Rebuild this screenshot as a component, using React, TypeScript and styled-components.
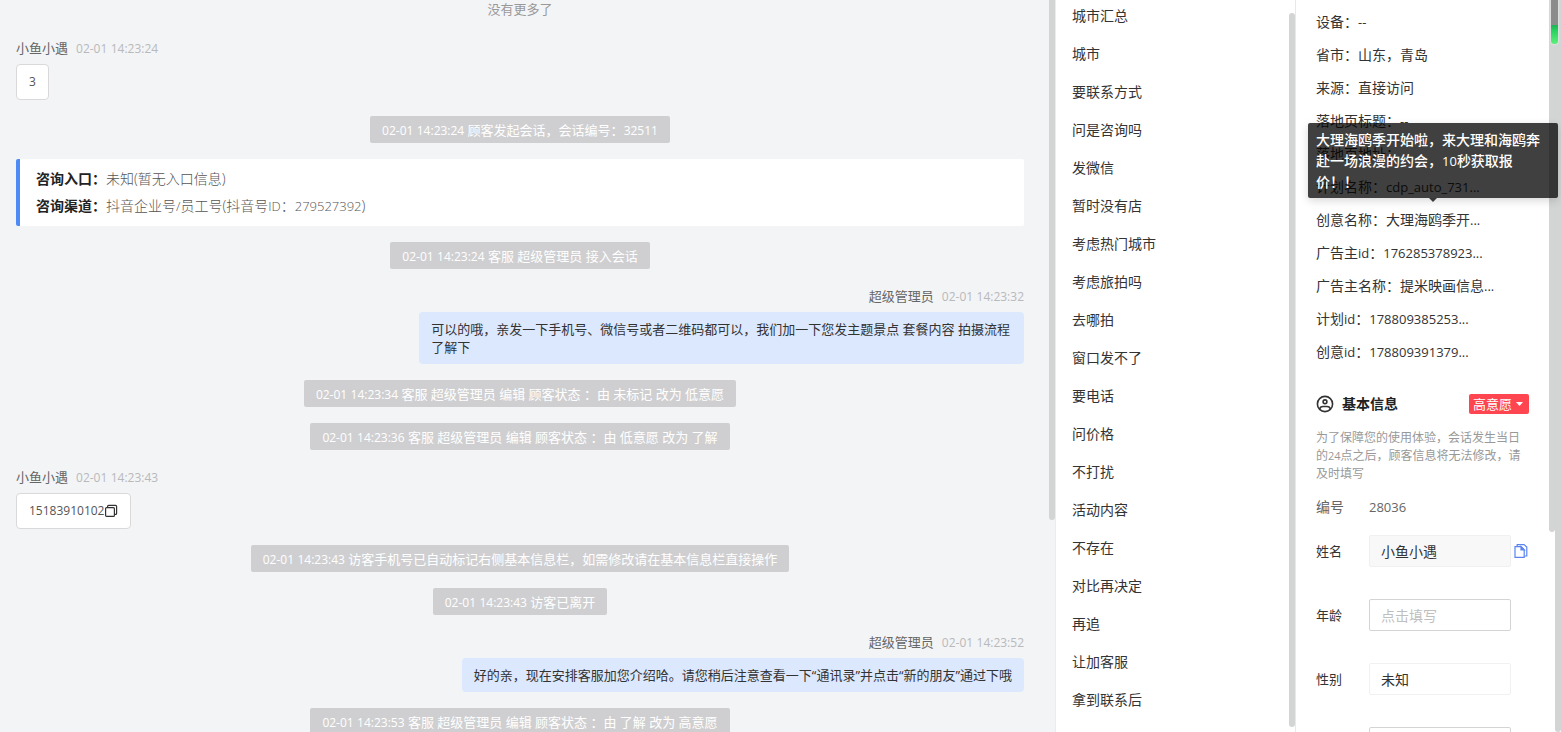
import React from 'react';
import styled, { createGlobalStyle } from 'styled-components';

const GlobalStyle = createGlobalStyle`
  * { box-sizing: border-box; }
  body {
    margin: 0;
    background: #fff;
    color: #333;
    font-family: "Open Sans", "Noto Sans CJK SC", sans-serif;
    font-size: 14px;
  }
  button, input, select { font: inherit; color: inherit; }
`;

const Page = styled.div`
  display: flex;
  height: 100vh;
  overflow: hidden;
`;

const Latin = styled.span`
  font-size: calc(1em - 1px);
  line-height: 1;
`;

/* Latin runs sit one pixel smaller than the Chinese text round them. */
function Mixed({ children }: { children: string }) {
  const parts = children.split(/([A-Za-z0-9_:.\-/]+)/);
  return (
    <>
      {parts.map((part, i) => (i % 2 ? <Latin key={i}>{part}</Latin> : part))}
    </>
  );
}

const Rail = styled.div`
  flex: none;
  width: 6px;
`;

const Thumb = styled.div<{ $top?: number; $height: string }>`
  height: ${p => p.$height};
  margin-top: ${p => p.$top ?? 0}px;
  background: #d3d4d4;
  border-radius: ${p => (p.$top ? '3px' : '0 0 3px 3px')};
`;

/* ---------- conversation ---------- */

const Chat = styled.main`
  flex: 1;
  min-width: 0;
  display: flex;
  background: #f3f4f6;
  border-right: 1px solid #ebecee;
`;

const Messages = styled.div`
  flex: 1;
  min-width: 0;
  display: flex;
  flex-direction: column;
  gap: 16px;
  padding: 0 25px 0 16px;
  font-size: 13px;

  > * { flex: none; }
`;

const NoMore = styled.div`
  padding-bottom: 3px;
  line-height: 18px;
  text-align: center;
  color: #999;
`;

const Notice = styled.div`
  align-self: center;
  padding: 1px 12px 0;
  line-height: 26px;
  border-radius: 2px;
  background: #cfcfd1;
  color: #fff;
`;

const MessageBox = styled.div<{ $mine?: boolean }>`
  display: flex;
  flex-direction: column;
  align-items: ${p => (p.$mine ? 'flex-end' : 'flex-start')};
  gap: 5px;
`;

const Meta = styled.div`
  display: flex;
  gap: 8px;
  line-height: 22px;
  color: #666;
`;

const Time = styled.time`
  color: #b8b9bb;
`;

const CustomerBubble = styled.div`
  display: flex;
  align-items: center;
  height: 36px;
  padding: 0 12px;
  border: 1px solid #d9d9db;
  border-radius: 4px;
  background: #fff;
  color: #555;
`;

const AgentBubble = styled.div`
  max-width: 60%;
  padding: 8px 12px;
  line-height: 18px;
  border-radius: 4px;
  background: #dce8fe;
  color: #333;
`;

const SourceCard = styled.dl`
  margin: 0;
  padding: 6px 16px 7px;
  border-left: 4px solid #4f8bf5;
  border-radius: 2px;
  background: #fff;
  font-size: 14px;
  line-height: 27px;
`;

const SourceRow = styled.div`
  display: flex;

  dt { font-weight: 700; color: #222; }
  dd { margin: 0; color: #555; font-weight: 300; }
`;

const IconButton = styled.button`
  display: flex;
  flex: none;
  padding: 0;
  border: 0;
  background: none;
  cursor: pointer;
`;

/* ---------- quick replies ---------- */

const Replies = styled.nav`
  flex: none;
  width: 240px;
  display: flex;
  border-right: 1px solid #e9e9eb;
`;

const ReplyList = styled.ul`
  flex: 1;
  margin: -3px 0 0;
  padding: 0 16px;
  list-style: none;
`;

const ReplyLink = styled.a`
  display: block;
  line-height: 38px;
  color: #333;
  text-decoration: none;
`;

/* ---------- customer details ---------- */

const Details = styled.aside`
  position: relative;
  flex: none;
  width: 265px;
  display: flex;
`;

const DetailsBody = styled.div`
  flex: 1;
  min-width: 0;
  padding: 5px 20px 0;
`;

const Facts = styled.dl`
  margin: 0;
`;

const Fact = styled.div`
  display: flex;
  line-height: 33px;
  white-space: nowrap;

  dd { margin: 0; }
`;

const SectionHead = styled.header`
  display: flex;
  align-items: center;
  gap: 8px;
  margin: 26px 0 15px;
  height: 20px;

  h2 { flex: 1; margin: 0; font-size: 14px; line-height: 20px; font-weight: 700; color: #222; }
`;

const IntentButton = styled.button`
  display: flex;
  align-items: center;
  gap: 4px;
  height: 20px;
  padding: 0 6px 0 4px;
  border: 0;
  border-radius: 2px;
  background: #ff4650;
  color: #fff;
  font-size: 13px;
  line-height: 20px;
`;

const Hint = styled.p`
  margin: 0;
  font-size: 12px;
  line-height: 18px;
  color: #999;
`;

const NumberRow = styled.div`
  display: flex;
  align-items: center;
  margin: 13px 0 17px;
  line-height: 22px;
  color: #666;
`;

const FieldName = styled.span`
  flex: none;
  width: 53px;
`;

const Form = styled.form`
  display: flex;
  flex-direction: column;
  gap: 32px;
`;

const Field = styled.div`
  display: flex;
  align-items: center;
  height: 32px;
  font-size: 13px;

  label { flex: none; width: 53px; line-height: 32px; }
`;

const control = `
  width: 142px;
  height: 32px;
  padding: 0 11px;
  border-radius: 2px;
  font-size: 14px;
  outline: 0;
`;

const TextInput = styled.input<{ $filled?: boolean }>`
  ${control}
  border: 1px solid ${p => (p.$filled ? '#f0f0f1' : '#d4d4d6')};
  background: ${p => (p.$filled ? '#f8f8f9' : '#fff')};

  &::placeholder { color: #bfbfbf; opacity: 1; }
`;

const Select = styled.select`
  ${control}
  appearance: none;
  border: 1px solid #f1f1f2;
  background: #fff;
`;

const CopyName = styled(IconButton)`
  margin-left: 3px;
`;

const Tooltip = styled.div`
  position: absolute;
  top: 123px;
  left: 12px;
  width: 250px;
  padding: 6px 8px;
  border-radius: 2px;
  background: rgba(0, 0, 0, 0.75);
  box-shadow: 0 3px 8px rgba(0, 0, 0, 0.15);
  color: #fff;
  font-weight: 500;
  line-height: 21px;

  &::after {
    content: '';
    position: absolute;
    top: 100%;
    left: 50%;
    margin-left: -4px;
    border: 4px solid transparent;
    border-top-color: rgba(0, 0, 0, 0.75);
    border-bottom: 0;
  }
`;

const Meter = styled.div`
  position: absolute;
  top: 0;
  right: 3px;
  width: 7px;
  height: 44px;
  border-radius: 0 0 4px 4px;
  background: linear-gradient(#8c8c8c 0 25px, #1fb155 25px, #27cf5c 30px, #5cf07a 44px);
  box-shadow: 0 0 2px #fff;
`;

const replies = [
  '城市汇总', '城市', '要联系方式', '问是咨询吗', '发微信', '暂时没有店', '考虑热门城市',
  '考虑旅拍吗', '去哪拍', '窗口发不了', '要电话', '问价格', '不打扰', '活动内容', '不存在',
  '对比再决定', '再追', '让加客服', '拿到联系后',
];

const facts: [string, string][] = [
  ['设备', '--'],
  ['省市', '山东，青岛'],
  ['来源', '直接访问'],
  ['落地页标题', '--'],
  ['落地页地址', ''],
  ['计划名称', 'cdp_auto_731...'],
  ['创意名称', '大理海鸥季开...'],
  ['广告主id', '176285378923...'],
  ['广告主名称', '提米映画信息...'],
  ['计划id', '178809385253...'],
  ['创意id', '178809391379...'],
];

function Message({ name, time, mine, children }: {
  name: string; time: string; mine?: boolean; children: React.ReactNode;
}) {
  return (
    <MessageBox $mine={mine}>
      <Meta><span>{name}</span><Time><Mixed>{time}</Mixed></Time></Meta>
      {children}
    </MessageBox>
  );
}

export default function App() {
  return (
    <>
      <GlobalStyle />
      <Page>
        <Chat>
          <Messages>
            <NoMore>没有更多了</NoMore>
            <Message name="小鱼小遇" time="02-01 14:23:24">
              <CustomerBubble><Latin>3</Latin></CustomerBubble>
            </Message>
            <Notice><Mixed>02-01 14:23:24 顾客发起会话，会话编号：32511</Mixed></Notice>
            <SourceCard>
              <SourceRow><dt>咨询入口：</dt><dd>未知(暂无入口信息)</dd></SourceRow>
              <SourceRow><dt>咨询渠道：</dt><dd><Mixed>抖音企业号/员工号(抖音号ID：279527392)</Mixed></dd></SourceRow>
            </SourceCard>
            <Notice><Mixed>02-01 14:23:24 客服 超级管理员 接入会话</Mixed></Notice>
            <Message name="超级管理员" time="02-01 14:23:32" mine>
              <AgentBubble>可以的哦，亲发一下手机号、微信号或者二维码都可以，我们加一下您发主题景点 套餐内容 拍摄流程了解下</AgentBubble>
            </Message>
            <Notice><Mixed>02-01 14:23:34 客服 超级管理员 编辑 顾客状态 ：由 未标记 改为 低意愿</Mixed></Notice>
            <Notice><Mixed>02-01 14:23:36 客服 超级管理员 编辑 顾客状态 ：由 低意愿 改为 了解</Mixed></Notice>
            <Message name="小鱼小遇" time="02-01 14:23:43">
              <CustomerBubble>
                <Latin>15183910102</Latin>
                <IconButton aria-label="复制">
                  <svg width="14" height="14" viewBox="0 0 14 14" fill="none" stroke="#333" strokeWidth="1.2">
                    <rect x="1.6" y="3.6" width="8.8" height="8.8" rx="1" />
                    <path d="M3.6 3.6V2.4a1 1 0 0 1 1-1h7a1 1 0 0 1 1 1v7a1 1 0 0 1-1 1h-1.2" />
                  </svg>
                </IconButton>
              </CustomerBubble>
            </Message>
            <Notice><Mixed>02-01 14:23:43 访客手机号已自动标记右侧基本信息栏，如需修改请在基本信息栏直接操作</Mixed></Notice>
            <Notice><Mixed>02-01 14:23:43 访客已离开</Mixed></Notice>
            <Message name="超级管理员" time="02-01 14:23:52" mine>
              <AgentBubble>好的亲，现在安排客服加您介绍哈。请您稍后注意查看一下“通讯录”并点击“新的朋友”通过下哦</AgentBubble>
            </Message>
            <Notice><Mixed>02-01 14:23:53 客服 超级管理员 编辑 顾客状态 ：由 了解 改为 高意愿</Mixed></Notice>
          </Messages>
          <Rail><Thumb $height="71vh" /></Rail>
        </Chat>

        <Replies>
          <ReplyList>
            {replies.map(reply => (
              <li key={reply}><ReplyLink href="#">{reply}</ReplyLink></li>
            ))}
          </ReplyList>
          <Rail><Thumb $top={13} $height="calc(100vh - 18px)" /></Rail>
        </Replies>

        <Details>
          <DetailsBody>
            <Facts>
              {facts.map(([name, value]) => (
                <Fact key={name}>
                  <dt><Mixed>{`${name}：`}</Mixed></dt>
                  <dd><Mixed>{value}</Mixed></dd>
                </Fact>
              ))}
            </Facts>
            <SectionHead>
              <svg width="18" height="18" viewBox="0 0 18 18" fill="none" stroke="#333" strokeWidth="1.6">
                <circle cx="9" cy="9" r="7.6" />
                <circle cx="9" cy="6.8" r="1.9" />
                <path d="M3.6 14.2c.4-1.800 1.600-2.700 3.400-2.700h4c1.800 0 3 .9 3.400 2.700" />
              </svg>
              <h2>基本信息</h2>
              <IntentButton>
                高意愿
                <svg width="7" height="4" viewBox="0 0 7 4" fill="#fff"><path d="M0 0h7L3.500 4z" /></svg>
              </IntentButton>
            </SectionHead>
            <Hint><Mixed>为了保障您的使用体验，会话发生当日的24点之后，顾客信息将无法修改，请及时填写</Mixed></Hint>
            <NumberRow><FieldName>编号</FieldName><Latin>28036</Latin></NumberRow>
            <Form>
              <Field>
                <label htmlFor="name">姓名</label>
                <TextInput id="name" $filled defaultValue="小鱼小遇" />
                <CopyName type="button" aria-label="复制姓名">
                  <svg width="14" height="16" viewBox="0 0 14 16" fill="none" stroke="#5b84ef" strokeWidth="1.2">
                    <path d="M1 3.600h6l3.200 3.200v7.600H1z" />
                    <path d="M7 3.600v3.200h3.200z" fill="#5b84ef" />
                    <path d="M3.200 3.600V1.600h6.800l2.800 2.400v9h-2.600" />
                  </svg>
                </CopyName>
              </Field>
              <Field>
                <label htmlFor="age">年龄</label>
                <TextInput id="age" placeholder="点击填写" />
              </Field>
              <Field>
                <label htmlFor="gender">性别</label>
                <Select id="gender"><option>未知</option></Select>
              </Field>
              <Field>
                <FieldName />
                <TextInput aria-label="电话" />
              </Field>
            </Form>
          </DetailsBody>
          <Rail><Thumb $height="532px" /></Rail>
          <Rail><Thumb $height="100vh" /></Rail>
          <Tooltip role="tooltip"><Mixed>大理海鸥季开始啦，来大理和海鸥奔赴一场浪漫的约会，10秒获取报价！！</Mixed></Tooltip>
          <Meter />
        </Details>
      </Page>
    </>
  );
}
